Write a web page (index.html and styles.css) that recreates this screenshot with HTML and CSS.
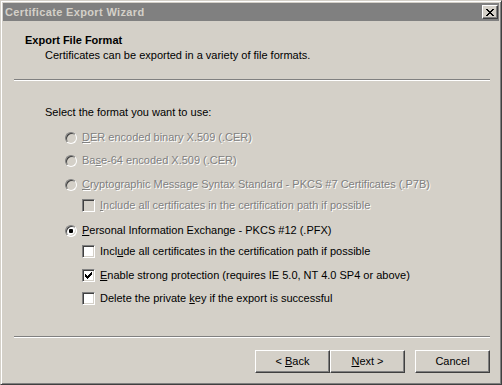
FILE: index.html
```html
<!DOCTYPE html>
<html lang="en">
<head>
<meta charset="UTF-8" />
<title>Certificate Export Wizard</title>
<link rel="stylesheet" href="styles.css">
</head>
<body>
  <div class="window">
    <div class="titlebar">
      <span class="title">Certificate Export Wizard</span>
      <span class="close">
        <svg width="8" height="7" viewBox="0 0 8 7" shape-rendering="crispEdges">
          <path d="M0 0h2v1h-2zM6 0h2v1h-2zM1 1h2v1h-2zM5 1h2v1h-2zM2 2h4v1h-4zM3 3h2v1h-2zM2 4h4v1h-4zM1 5h2v1h-2zM5 5h2v1h-2zM0 6h2v1h-2zM6 6h2v1h-2z" fill="#000"/>
        </svg>
      </span>
    </div>

    <!-- wizard header -->
    <div class="header">
      <div class="head-title">Export File Format</div>
      <div class="head-sub">Certificates can be exported in a variety of file formats.</div>
    </div>
    <div class="sep"></div>

    <div class="content">
      <div class="prompt">Select the format you want to use:</div>

      <div class="row opt disabled g1"><span class="radio"></span><span class="label"><u>D</u>ER encoded binary X.509 (.CER)</span></div>
      <div class="row opt disabled g2"><span class="radio"></span><span class="label">Ba<u>s</u>e-64 encoded X.509 (.CER)</span></div>
      <div class="row opt disabled g3"><span class="radio"></span><span class="label"><u>C</u>ryptographic Message Syntax Standard - PKCS #7 Certificates (.P7B)</span></div>
      <div class="row sub disabled g4"><span class="check"></span><span class="label"><u>I</u>nclude all certificates in the certification path if possible</span></div>

      <div class="row opt g5"><span class="radio on"></span><span class="label"><u>P</u>ersonal Information Exchange - PKCS #12 (.PFX)</span></div>
      <div class="row sub g6"><span class="check"></span><span class="label">Incl<u>u</u>de all certificates in the certification path if possible</span></div>
      <div class="row sub g7">
        <span class="check">
          <svg width="7" height="7" viewBox="0 0 7 7" shape-rendering="crispEdges">
            <path d="M6 0h1v3h-1zM5 1h1v3h-1zM4 2h1v3h-1zM3 3h1v3h-1zM2 4h1v3h-1zM1 3h1v3h-1zM0 2h1v3h-1z" fill="#000"/>
          </svg>
        </span>
        <span class="label"><u>E</u>nable strong protection (requires IE 5.0, NT 4.0 SP4 or above)</span>
      </div>
      <div class="row sub g8"><span class="check"></span><span class="label">Delete the private <u>k</u>ey if the export is successful</span></div>
    </div>

    <div class="sep sep-foot"></div>
    <div class="buttons">
      <button type="button" class="btn">&lt; <u>B</u>ack</button>
      <button type="button" class="btn"><u>N</u>ext &gt;</button>
      <button type="button" class="btn cancel">Cancel</button>
    </div>
  </div>
</body>
</html>
```

FILE: styles.css
```css
:root {
  --face: #d4d0c8;
  --shadow: #808080;
  --dark: #404040;
  --light: #ffffff;
}
* { box-sizing: border-box; margin: 0; padding: 0; }
body { background: var(--face); font-family: 'Liberation Sans', Arial, sans-serif; font-size: 11px; line-height: 13px; color: #000; }
u { text-decoration: underline; text-underline-offset: 1px; }

/* classic window frame */
.window {
  width: 502px;
  height: 385px;
  display: flex;
  flex-direction: column;
  background: var(--face);
  border: 1px solid;
  border-color: var(--face) var(--dark) var(--dark) var(--face);
  box-shadow: inset 1px 1px 0 var(--light), inset -1px -1px 0 var(--shadow);
  padding: 2px;
}
.titlebar { height: 18px; background: var(--shadow); display: flex; align-items: center; padding-left: 2px; }
.title { font-weight: 700; color: var(--face); letter-spacing: 0.35px; }
.close {
  margin-left: auto;
  margin-right: 1px;
  width: 16px;
  height: 14px;
  display: flex;
  align-items: center;
  justify-content: center;
  background: var(--face);
  border: 1px solid;
  border-color: var(--light) var(--dark) var(--dark) var(--light);
  box-shadow: inset -1px -1px 0 var(--shadow);
}
.close svg { display: block; margin-left: -1px; }

/* header */
.header { padding: 13px 0 0 22px; height: 58px; }
.head-title { font-weight: 700; }
.head-sub { margin-top: 2px; padding-left: 20px; }

.sep { height: 2px; margin: 0 9px 0 11px; border-top: 1px solid var(--shadow); border-bottom: 1px solid var(--light); }

/* options */
.content { padding: 25px 0 0 42px; height: 255px; }
.row { display: flex; align-items: center; height: 13px; }
.row .label { white-space: nowrap; }
.opt { padding-left: 20px; }
.opt .label { margin-left: 5px; }
.sub { padding-left: 37px; }
.sub .label { margin-left: 5px; }
.g1 { margin-top: 12px; }
.g2 { margin-top: 10px; }
.g3 { margin-top: 11px; }
.g4 { margin-top: 8px; }
.g5 { margin-top: 12px; }
.g6 { margin-top: 8px; }
.g7 { margin-top: 11px; }
.g8 { margin-top: 10px; }

.disabled .label { color: var(--shadow); text-shadow: 1px 1px 0 var(--light); }

.radio {
  width: 12px;
  height: 12px;
  flex: none;
  border-radius: 50%;
  border: 1px solid;
  border-color: var(--shadow) var(--light) var(--light) var(--shadow);
  box-shadow: inset 1px 1px 0 var(--dark), inset -1px -1px 0 var(--face);
  background: var(--light);
  display: flex;
  align-items: center;
  justify-content: center;
}
.disabled .radio { background: var(--face); }
.radio.on::after { content: ''; width: 4px; height: 4px; border-radius: 1px; background: #000; }

.check {
  width: 13px;
  height: 13px;
  flex: none;
  border: 1px solid;
  border-color: var(--shadow) var(--light) var(--light) var(--shadow);
  box-shadow: inset 1px 1px 0 var(--dark), inset -1px -1px 0 var(--face);
  background: var(--light);
  display: flex;
  align-items: center;
  justify-content: center;
}
.disabled .check { background: var(--face); }
.check svg { display: block; }

/* footer buttons */
.sep-foot { margin-top: 0; }
.buttons { display: flex; justify-content: flex-end; padding: 12px 9px 0 0; }
.btn {
  width: 75px;
  height: 23px;
  font: inherit;
  color: #000;
  background: var(--face);
  border: 1px solid;
  border-color: var(--light) var(--dark) var(--dark) var(--light);
  box-shadow: inset -1px -1px 0 var(--shadow);
}
.btn.cancel { margin-left: 10px; }
```
